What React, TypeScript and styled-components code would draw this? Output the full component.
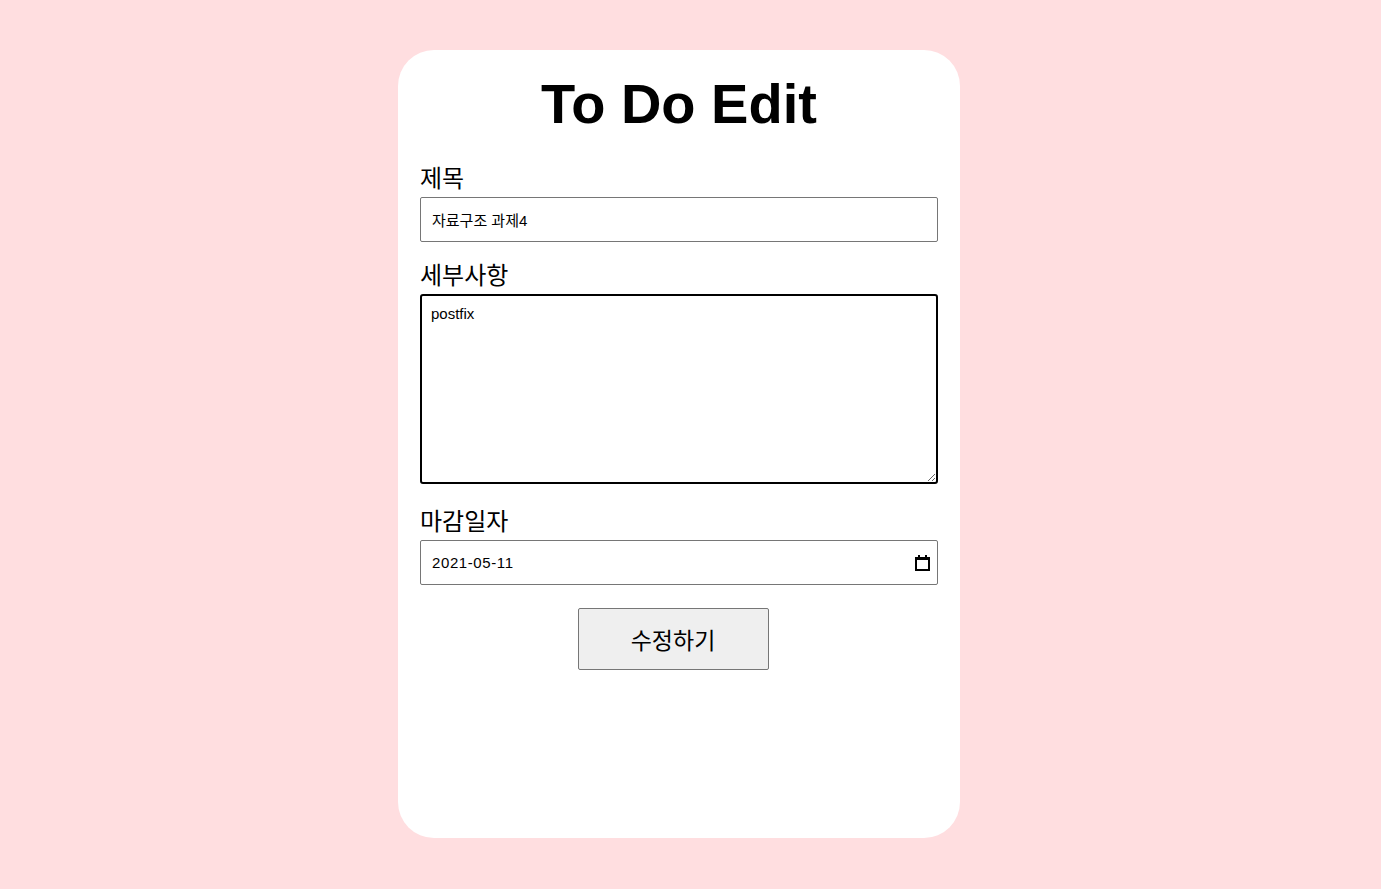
import React from "react";
import styled, { createGlobalStyle } from "styled-components";

const GlobalStyle = createGlobalStyle`
    html, body {
        margin: 0;
        padding: 0;
        background-color: #ffdee0;
        font-family: "Liberation Sans", "Noto Sans CJK KR", Arial, sans-serif;
    }
`;

const Page = styled.div`
    min-height: 889px;
    padding: 50px 0 0 398px;
    box-sizing: border-box;
`;

const Card = styled.form`
    width: 562px;
    height: 788px;
    box-sizing: border-box;
    padding: 0 22px;
    background-color: #ffffff;
    border-radius: 36px;
    display: flex;
    flex-direction: column;
`;

const Title = styled.h1`
    margin: 22px 0 22px;
    text-align: center;
    font-size: 56px;
    line-height: 64px;
    font-weight: bold;
    color: #000;
`;

const Label = styled.label<{ gap?: number }>`
    display: block;
    margin-top: ${(p) => p.gap ?? 0}px;
    margin-bottom: 1px;
    font-family: "Noto Sans CJK KR", "Liberation Sans", sans-serif;
    font-size: 24px;
    line-height: 38px;
    height: 38px;
    color: #000;
`;

const fieldBase = `
    width: 518px;
    box-sizing: border-box;
    font-family: "Liberation Sans", "Noto Sans CJK KR", sans-serif;
    font-size: 15px;
    color: #000;
    background: #fff;
    outline: none;
`;

const TextInput = styled.input`
    ${fieldBase}
    display: block;
    height: 45px;
    padding: 0 11px;
    border: 1px solid #767676;
    border-radius: 2px;
`;

const DetailArea = styled.textarea`
    ${fieldBase}
    display: block;
    height: 190px;
    padding: 9px 9px;
    border: 2px solid #000;
    border-radius: 3px;
    resize: vertical;
    caret-color: #000;
`;

const DateField = styled.div`
    ${fieldBase}
    height: 45px;
    display: flex;
    align-items: center;
    padding: 0 7px 0 11px;
    border: 1px solid #767676;
    border-radius: 2px;
`;

const DateText = styled.input`
    flex: 1;
    min-width: 0;
    border: none;
    outline: none;
    padding: 0;
    background: transparent;
    font-family: "Liberation Sans", sans-serif;
    font-size: 15px;
    letter-spacing: 0.6px;
    color: #000;
`;

const CalendarIcon = styled.svg`
    width: 15px;
    height: 16px;
    flex: none;
`;

const Actions = styled.div`
    display: flex;
    justify-content: center;
    margin-top: 23px;
`;

const SubmitButton = styled.button`
    width: 191px;
    height: 62px;
    box-sizing: border-box;
    background-color: #efefef;
    border: 1px solid #767676;
    border-radius: 2px;
    font-family: "Noto Sans CJK KR", "Liberation Sans", sans-serif;
    font-size: 23px;
    color: #000;
    margin-left: -12px;
`;

export default function App() {
    return (
        <>
            <GlobalStyle />
            <Page>
                <Card onSubmit={(e) => e.preventDefault()}>
                    <Title>To Do Edit</Title>
                    <Label htmlFor="title">제목</Label>
                    <TextInput id="title" type="text" defaultValue="자료구조 과제4" />
                    <Label htmlFor="detail" gap={13}>세부사항</Label>
                    <DetailArea id="detail" defaultValue="postfix" autoFocus />
                    <Label htmlFor="due" gap={17}>마감일자</Label>
                    <DateField>
                        <DateText id="due" type="text" defaultValue="2021-05-11" />
                        <CalendarIcon viewBox="0 0 15 16">
                            <rect x="3" y="0" width="2" height="3" fill="#000" />
                            <rect x="10" y="0" width="2" height="3" fill="#000" />
                            <path d="M0 2h15v14H0z M2 5v9h11V5z" fill="#000" fillRule="evenodd" />
                        </CalendarIcon>
                    </DateField>
                    <Actions>
                        <SubmitButton type="submit">수정하기</SubmitButton>
                    </Actions>
                </Card>
            </Page>
        </>
    );
}
